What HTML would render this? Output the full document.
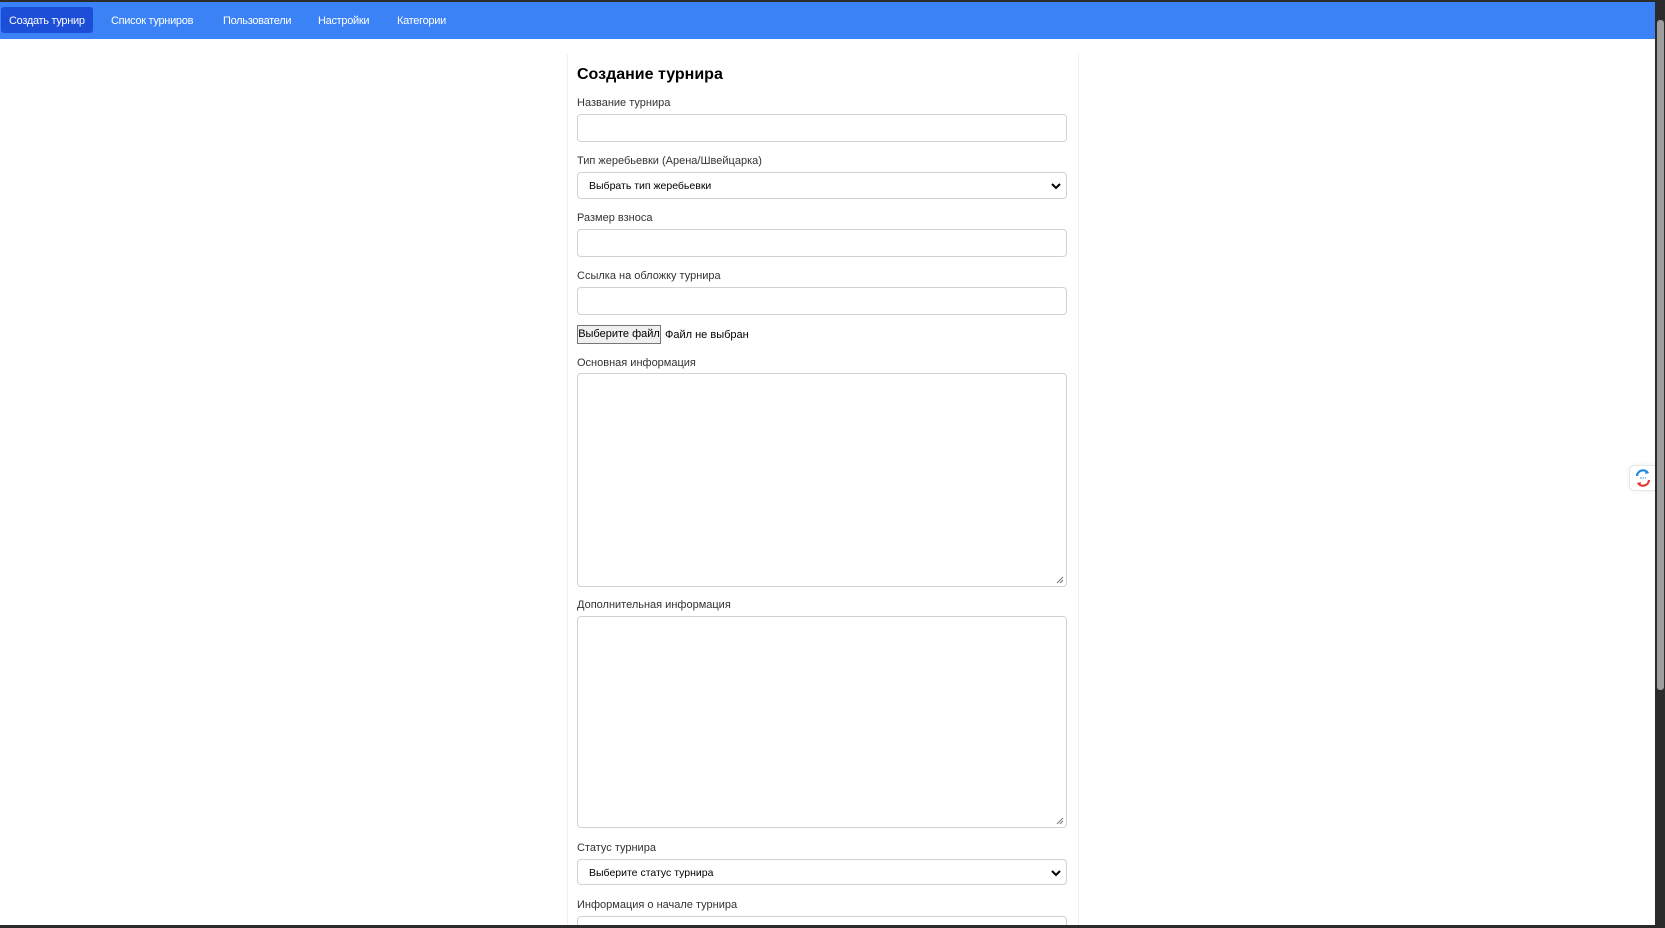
<!DOCTYPE html>
<html style="height:928px;overflow:hidden"><head><meta charset="utf-8"><style>
*{box-sizing:border-box;margin:0;padding:0}
body{width:1665px;height:928px;overflow:hidden;background:#fff;font-family:"Liberation Sans","DejaVu Sans",sans-serif;position:relative}
.top{position:absolute;left:0;top:0;width:1665px;height:2px;background:#2b2b2b}
.nav{position:absolute;left:0;top:2px;width:1655px;height:37px;background:#3b82f6}
.nav span{position:absolute;top:12px;color:#fff;font-size:11px;letter-spacing:-0.3px;line-height:14px}
.act{position:absolute;left:1px;top:5px;width:92px;height:26px;background:#1d4ed8;border-radius:3px}
.card{position:absolute;left:567px;top:54px;width:512px;height:871px;border-left:1px solid #f0f0f0;border-right:1px solid #f0f0f0}
.el{position:absolute;left:577px;width:490px}
.h{font-weight:bold;font-size:16px;color:#000}
.l{font-size:11px;color:#333;line-height:13px}
.i{border:1px solid #cfd2d8;border-radius:4px;background:#fff}
.s{font-size:10.5px;color:#000;padding-left:11px;line-height:26px}
.s svg{position:absolute;right:5px;top:9px}
.g{position:absolute;right:2px;bottom:2px}
.btn{position:absolute;left:577px;top:325px;width:84px;height:19px;border:1px solid #767676;background:#efefef;font-size:11px;line-height:17px;text-align:center;color:#000}
.ft{position:absolute;left:665px;top:329px;font-size:11px;color:#000}
.sb{position:absolute;left:1655px;top:2px;width:10px;height:926px;background:#2b2b2b;z-index:5}
.th{position:absolute;left:1657px;top:20px;width:7px;height:670px;background:#9e9e9e;border-radius:3px;z-index:6}
.bot{position:absolute;left:0;top:925px;width:1665px;height:3px;background:#2b2b2b;z-index:5}
.ico{position:absolute;left:1629px;top:465px;width:27px;height:26px;border:1px solid #e6e6e6;border-radius:5px 0 0 5px;background:#fff;box-shadow:0 0 6px rgba(0,0,0,.06)}
</style></head><body>
<div class="top"></div>
<div class="nav">
<div class="act"></div>
<span style="left:9px">Создать турнир</span>
<span style="left:111px">Список турниров</span>
<span style="left:223px">Пользователи</span>
<span style="left:318px">Настройки</span>
<span style="left:397px">Категории</span>
</div>
<div class="card"></div>
<div class="el h" style="top:66px">Создание турнира</div>
<div class="el l" style="top:97px">Название турнира</div>
<div class="el i" style="top:114px;height:28px"></div>
<div class="el l" style="top:155px">Тип жеребьевки (Арена/Швейцарка)</div>
<div class="el i s" style="top:172px;height:27px">Выбрать тип жеребьевки<svg width="10" height="8" viewBox="0 0 10 8"><path d="M1 2l4 4 4-4" stroke="#000" stroke-width="2" fill="none"/></svg></div>
<div class="el l" style="top:212px">Размер взноса</div>
<div class="el i" style="top:229px;height:28px"></div>
<div class="el l" style="top:270px">Ссылка на обложку турнира</div>
<div class="el i" style="top:287px;height:28px"></div>
<div class="btn">Выберите файл</div>
<div class="ft">Файл не выбран</div>
<div class="el l" style="top:357px">Основная информация</div>
<div class="el i" style="top:373px;height:214px"><svg class="g" width="8" height="8" viewBox="0 0 8 8"><path d="M7 1L1 7M7 4L4 7" stroke="#777" stroke-width="1"/></svg></div>
<div class="el l" style="top:599px">Дополнительная информация</div>
<div class="el i" style="top:616px;height:212px"><svg class="g" width="8" height="8" viewBox="0 0 8 8"><path d="M7 1L1 7M7 4L4 7" stroke="#777" stroke-width="1"/></svg></div>
<div class="el l" style="top:842px">Статус турнира</div>
<div class="el i s" style="top:859px;height:26px">Выберите статус турнира<svg width="10" height="8" viewBox="0 0 10 8"><path d="M1 2l4 4 4-4" stroke="#000" stroke-width="2" fill="none"/></svg></div>
<div class="el l" style="top:899px">Информация о начале турнира</div>
<div class="el i" style="top:916px;height:9px;border-bottom:none;border-radius:4px 4px 0 0"></div>
<div class="ico"><svg width="26" height="24" viewBox="0 0 26 24"><path d="M7 10a6 6 0 0 1 11-3" stroke="#1e88e5" stroke-width="2.2" fill="none"/><path d="M16 4l3 3-4 1z" fill="#1e88e5"/><path d="M19 14a6 6 0 0 1-11 3" stroke="#e53935" stroke-width="2.2" fill="none"/><path d="M10 20l-3-3 4-1z" fill="#e53935"/><path d="M10 12h6" stroke="#1e88e5" stroke-width="1" stroke-dasharray="1.5 1"/></svg></div>
<div class="sb"></div><div class="th"></div>
<div class="bot"></div>
</body></html>
